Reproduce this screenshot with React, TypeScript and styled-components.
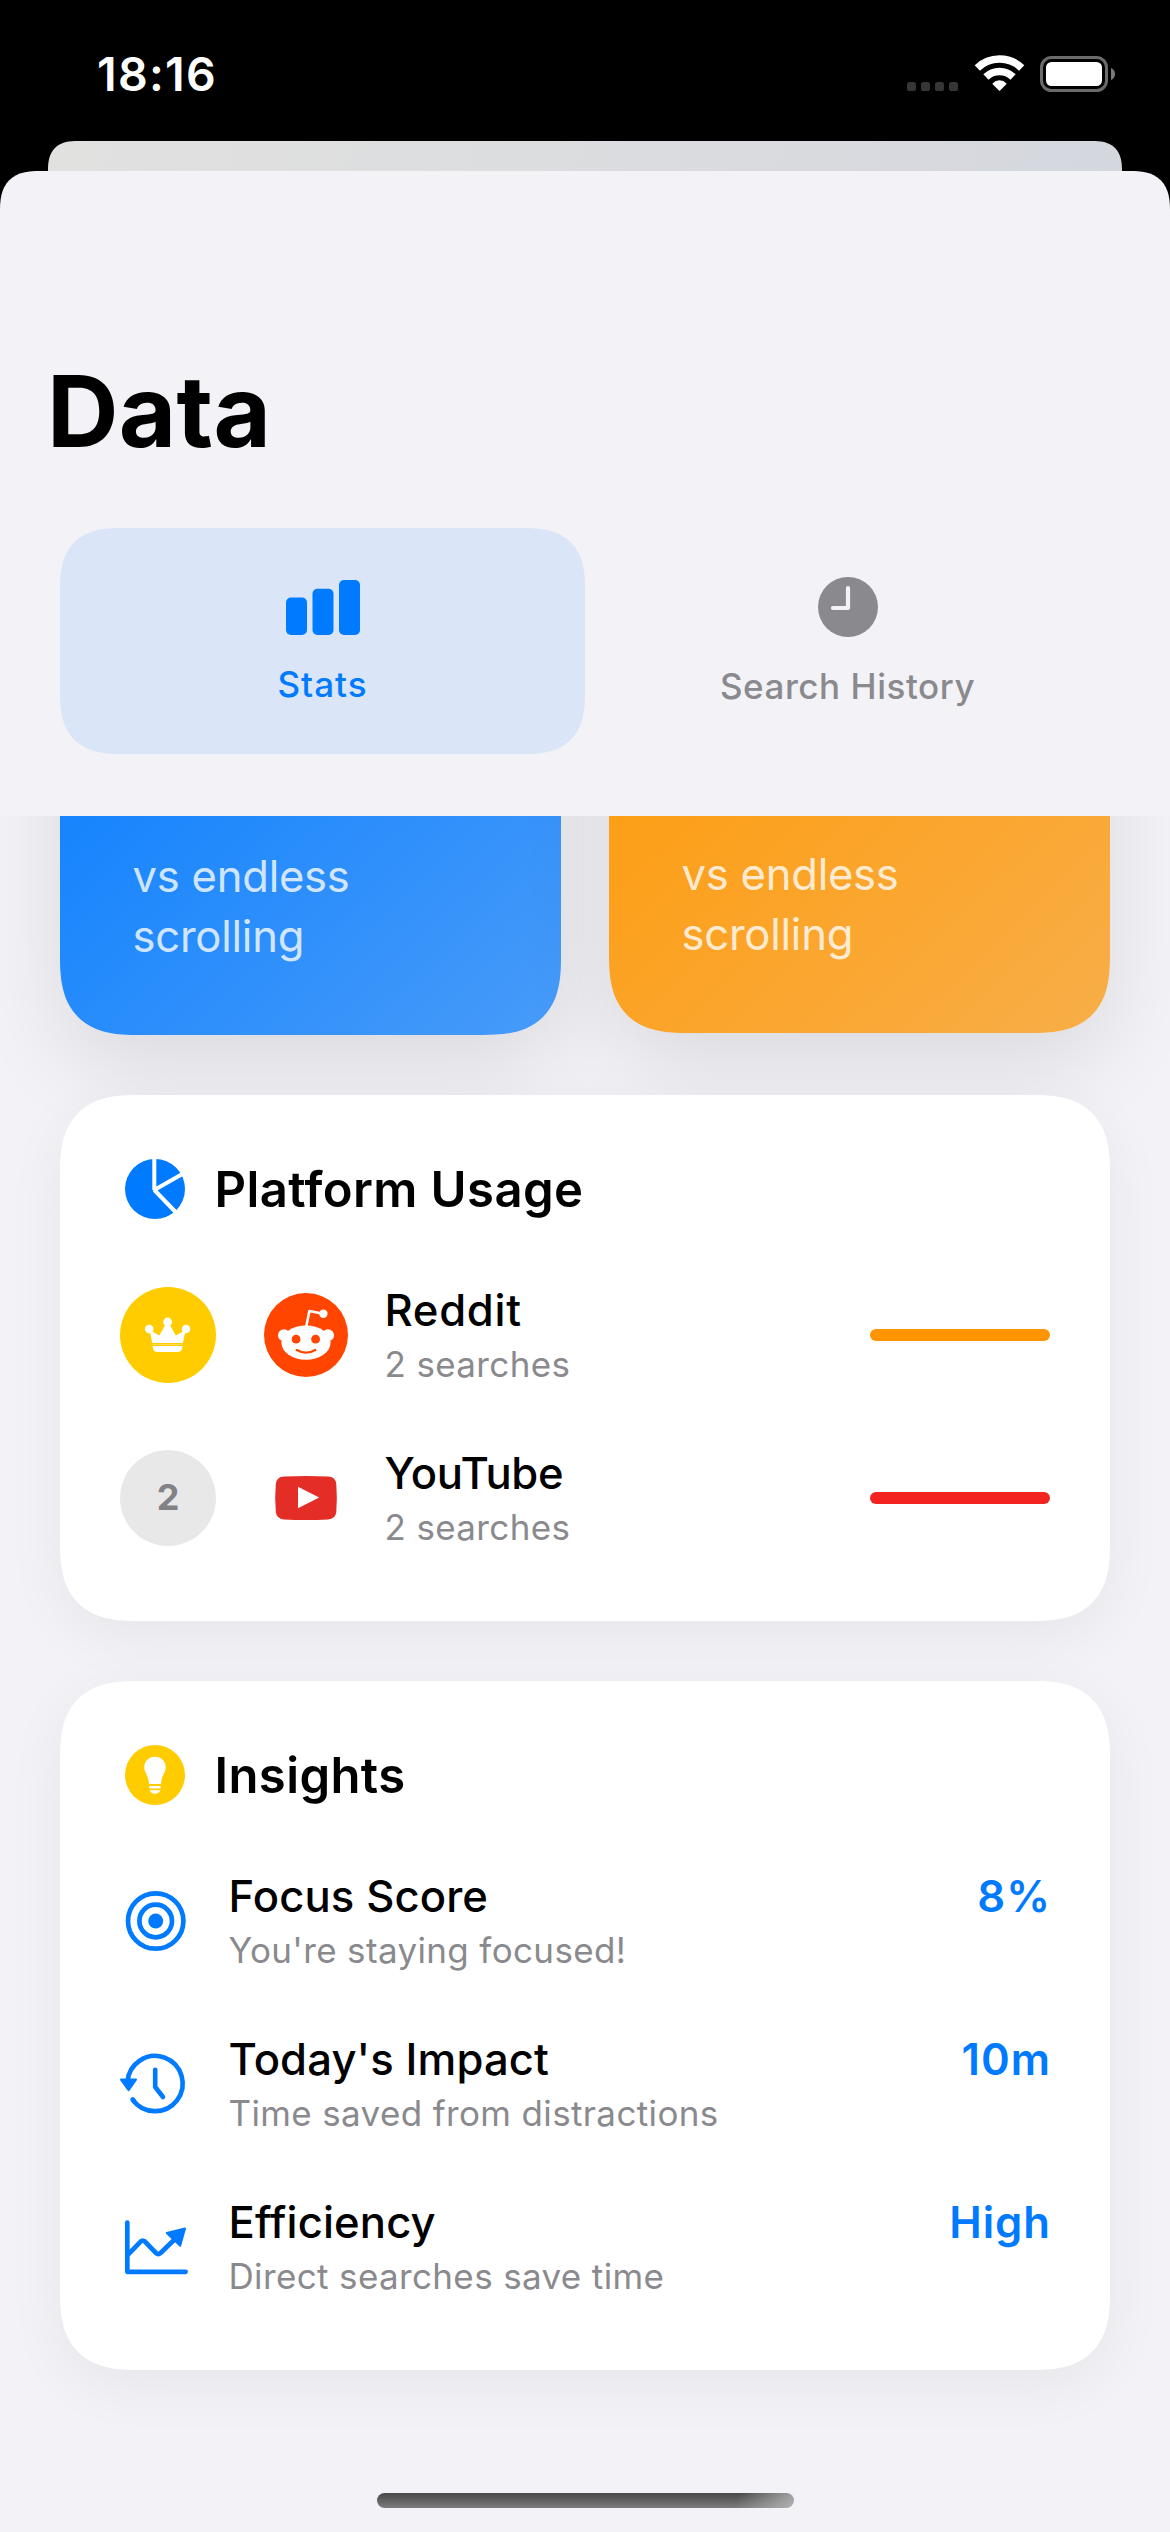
import React from "react";
import styled, { createGlobalStyle } from "styled-components";

const color = {
  background: "#f2f2f7",
  blue: "#007aff",
  gray: "#8a8a8e",
  yellow: "#ffcc00",
  orange: "#ff9500",
  red: "#f22321",
};

const GlobalStyle = createGlobalStyle`
  html, body { margin: 0; padding: 0; background: #000; }
  *, *::before, *::after { box-sizing: border-box; }
  svg { display: block; flex: none; overflow: visible; }
  h1, h2, p { margin: 0; }
`;

const Screen = styled.div`
  position: relative;
  width: 1170px;
  height: 2532px;
  overflow: hidden;
  display: flex;
  flex-direction: column;
  background: #000;
  color: #000;
  font-family: Inter, "Liberation Sans", sans-serif;
`;

const StatusBar = styled.header`
  flex: none;
  height: 141px;
  padding: 0 55px 49px 97px;
  display: flex;
  align-items: flex-end;
  justify-content: space-between;
`;

const Clock = styled.span`
  margin-bottom: -10px;
  color: #fff;
  font-size: 46.5px;
  font-weight: 600;
  line-height: 56px;
  letter-spacing: 1.25px;
`;

const StatusIcons = styled.div`
  display: flex;
  align-items: flex-end;
  gap: 16.5px;
`;

const BackSheet = styled.div`
  flex: none;
  height: 30px;
  margin: 0 48px;
  border-radius: 40px 40px 0 0;
  corner-shape: superellipse(1.4);
  background: linear-gradient(100deg, #e1e1e0, #dcdddf 45%, #d4d7de);
`;

const Sheet = styled.main`
  flex: 1;
  min-height: 0;
  overflow: hidden;
  display: flex;
  flex-direction: column;
  border-radius: 40px 40px 0 0;
  corner-shape: superellipse(1.4);
  background: ${color.background};
`;

const SheetHeader = styled.div`
  flex: none;
  height: 645px;
  padding: 180px 60px 0;
`;

const Title = styled.h1`
  margin: 0 0 57px -13px;
  font-size: 99px;
  font-weight: 700;
  line-height: 120px;
  letter-spacing: 0.3px;
`;

const Tabs = styled.nav`
  display: grid;
  grid-template-columns: 1fr 1fr;
  height: 226px;
`;

const Tab = styled.div<{ $active?: boolean }>`
  display: flex;
  flex-direction: column;
  align-items: center;
  justify-content: center;
  gap: 28px;
  padding-top: ${(p) => (p.$active ? 3 : 1)}px;
  border-radius: 62px;
  corner-shape: superellipse(1.4);
  background: ${(p) => (p.$active ? "#dae5f7" : "transparent")};
  color: ${(p) => (p.$active ? color.blue : color.gray)};
  font-size: 35px;
  font-weight: 500;
  line-height: 42px;
  letter-spacing: ${(p) => (p.$active ? 1 : 0.55)}px;
`;

const Scroll = styled.div`
  flex: 1;
  min-height: 0;
  overflow: hidden;
  padding: 0 60px;
  display: flex;
  flex-direction: column;
  gap: 60px;
`;

const StatCards = styled.section`
  flex: none;
  display: grid;
  grid-template-columns: 1fr 1fr;
  align-items: start;
  gap: 48px;
  margin-top: -311px;
`;

const StatCard = styled.div<{ $from: string; $to: string; $height: number }>`
  height: ${(p) => p.$height}px;
  padding: 0 72px 68px 72.5px;
  display: flex;
  align-items: flex-end;
  border-radius: 78px;
  corner-shape: superellipse(1.4);
  background: linear-gradient(136.6deg, ${(p) => p.$from}, ${(p) => p.$to});
  box-shadow: 0 30px 90px rgba(0, 0, 0, 0.1);
`;

const StatCaption = styled.p`
  color: rgba(255, 255, 255, 0.8);
  font-size: 43.6px;
  line-height: 60px;
  letter-spacing: -0.25px;
`;

const Card = styled.section`
  flex: none;
  padding: 64px 60px 75px;
  display: flex;
  flex-direction: column;
  border-radius: 78px;
  corner-shape: superellipse(1.4);
  background: #fff;
  box-shadow: 0 15px 60px rgba(0, 0, 0, 0.055);
`;

const CardHeader = styled.div`
  height: 60px;
  margin-bottom: 68px;
  padding-left: 5px;
  display: flex;
  align-items: center;
  gap: 29.5px;
`;

const CardTitle = styled.h2`
  padding-top: 2px;
  font-size: 49px;
  font-weight: 600;
  line-height: 60px;
  letter-spacing: 0.4px;
`;

const Rows = styled.div`
  display: flex;
  flex-direction: column;
  gap: 67px;
`;

const Row = styled.div`
  height: 96px;
  display: flex;
  align-items: center;
`;

const Rank = styled.div<{ $first?: boolean }>`
  flex: none;
  width: 96px;
  height: 96px;
  margin-right: 48px;
  display: flex;
  align-items: center;
  justify-content: center;
  padding-bottom: ${(p) => (p.$first ? 0 : 2)}px;
  border-radius: 50%;
  background: ${(p) => (p.$first ? color.yellow : "#e8e8e8")};
  color: #828286;
  font-size: 36px;
  font-weight: 700;
`;

const RowText = styled.div`
  flex: 1;
  padding: 0 0 1px 36.5px;
  display: flex;
  flex-direction: column;
  gap: 5px;
`;

const Name = styled.p<{ $tracking?: number }>`
  font-size: 43.6px;
  font-weight: 500;
  line-height: 54px;
  letter-spacing: ${(p) => p.$tracking ?? 0.12}px;
`;

const Detail = styled.p`
  color: ${color.gray};
  font-size: 35px;
  line-height: 42px;
  letter-spacing: 0.36px;
`;

const UsageBar = styled.div<{ $color: string }>`
  flex: none;
  width: 180px;
  height: 12px;
  border-radius: 6px;
  background: ${(p) => p.$color};
`;

const Value = styled.p`
  align-self: flex-start;
  margin: -3px -1px 0 0;
  color: ${color.blue};
  font-size: 43.6px;
  font-weight: 600;
  line-height: 54px;
  letter-spacing: 1px;
`;

const HomeIndicator = styled.div`
  position: absolute;
  left: 377px;
  bottom: 24px;
  width: 417px;
  height: 15px;
  border-radius: 8px;
  background:
    linear-gradient(105deg, transparent 86%, rgba(190, 190, 190, 0.8) 100%),
    linear-gradient(#484848, #7c7c7c);
`;

const CellularDots = () => (
  <svg width="51" height="10" viewBox="0 0 51 10" fill="#363636">
    {[0, 14, 28, 42].map((x) => (
      <rect key={x} x={x} y="0" width="9" height="9" rx="2.6" />
    ))}
  </svg>
);

const WifiIcon = () => (
  <svg width="49" height="37" viewBox="0 0 48.6 37" fill="none" stroke="#fff" strokeWidth="7.6">
    <path d="M2.1 13A32 32 0 0 1 46.5 13" />
    <path d="M10.75 22A19.5 19.5 0 0 1 37.85 22" />
    <path
      d="M24.3 35L18.1 28.7A8.8 8.8 0 0 1 30.5 28.7Z"
      fill="#fff"
      strokeWidth="1.6"
      strokeLinejoin="round"
    />
  </svg>
);

const BatteryIcon = () => (
  <svg width="75" height="36" viewBox="0 0 75 36">
    <rect x="1.5" y="1.5" width="65" height="33" rx="10" fill="none" stroke="#6b6b6b" strokeWidth="3" />
    <rect x="6" y="6" width="56" height="24" rx="5.5" fill="#fff" />
    <path d="M71 12C73.5 13 75 15 75 18S73.5 23 71 24Z" fill="#7a7a7a" />
  </svg>
);

const BarsIcon = () => (
  <svg width="74" height="55" viewBox="0 0 74 55" fill="currentColor">
    <rect x="0" y="17.5" width="21" height="37.5" rx="5" />
    <rect x="26.5" y="8.7" width="21" height="46.3" rx="5" />
    <rect x="53" y="0" width="21" height="55" rx="5" />
  </svg>
);

const ClockFillIcon = () => (
  <svg width="60" height="60" viewBox="0 0 60 60">
    <circle cx="30" cy="30" r="30" fill="currentColor" />
    <path
      d="M30 11V31H15"
      fill="none"
      stroke={color.background}
      strokeWidth="4.2"
      strokeLinecap="round"
      strokeLinejoin="round"
    />
  </svg>
);

const PieIcon = () => (
  <svg width="60" height="60" viewBox="0 0 60 60">
    <circle cx="30" cy="30" r="30" fill={color.blue} />
    <path
      d="M29.3 -1V31L60 13.4M29.3 31L52.5 55"
      fill="none"
      stroke="#fff"
      strokeWidth="4"
      strokeLinejoin="bevel"
    />
  </svg>
);

const CrownIcon = () => (
  <svg width="96" height="96" viewBox="0 0 96 96" fill="#fff">
    <circle cx="29.2" cy="42" r="4.3" />
    <circle cx="47.6" cy="35" r="4.4" />
    <circle cx="66" cy="42" r="4.3" />
    <path d="M29.5 43L39.3 48.5L45.5 37.5H49.7L55.8 48.5L65.7 43L62.9 56H32.3Z" />
    <path d="M32.4 57.2H62.8V58H32.4Z" fillOpacity="0.4" />
    <path d="M32.6 59H62.6L61.8 62.4Q61 65 58 65H37.2Q34.2 65 33.4 62.4Z" />
  </svg>
);

const RedditIcon = () => (
  <svg width="84" height="84" viewBox="0 0 84 84" fill="#fff">
    <circle cx="42" cy="42" r="42" fill="#ff4500" />
    <path
      d="M42.3 33.5L45.4 18L59 20.8"
      fill="none"
      stroke="#fff"
      strokeWidth="2.6"
      strokeLinejoin="round"
    />
    <circle cx="59.4" cy="20.8" r="4.2" />
    <circle cx="20" cy="42.2" r="6" />
    <circle cx="64" cy="42.2" r="6" />
    <ellipse cx="42" cy="49.6" rx="24.6" ry="17.1" />
    <circle cx="32.1" cy="46.2" r="4.4" fill="#ff4500" />
    <circle cx="51.6" cy="46.2" r="4.4" fill="#ff4500" />
    <path
      d="M32.8 57Q42 62.4 51.2 57"
      fill="none"
      stroke="#ff4500"
      strokeWidth="2.3"
      strokeLinecap="round"
    />
  </svg>
);

const YouTubeIcon = () => (
  <svg width="84" height="84" viewBox="0 0 84 84">
    <path
      d="M20 20.6Q42 19.4 64 20.6Q71.6 21 72.3 28Q73.4 42 72.3 56Q71.6 63 64 63.4Q42 64.6 20 63.4Q12.6 63 11.8 56Q10.6 42 11.8 28Q12.6 21 20 20.6Z"
      fill="#e52d27"
    />
    <path d="M34 30.8L55.2 41.4L34 52.2Z" fill="#fff" />
  </svg>
);

const BulbIcon = () => (
  <svg width="60" height="60" viewBox="0 0 60 60">
    <circle cx="30" cy="30" r="30" fill={color.yellow} />
    <g fill="#fff">
      <path d="M30 11.7C36.2 11.7 40.7 16.2 40.7 22C40.7 28 36.8 29 36 39H24C23.2 29 19.3 28 19.3 22C19.3 16.2 23.8 11.7 30 11.7Z" />
      <rect x="24.2" y="41" width="11.6" height="2.6" rx="0.8" />
      <path d="M24.6 45.3H35.4C34.6 47.6 32.6 48.8 30 48.8S25.4 47.6 24.6 45.3Z" />
    </g>
  </svg>
);

const TargetIcon = () => (
  <svg width="72" height="96" viewBox="120 -48 72 96" fill="none" stroke={color.blue} strokeWidth="4.7">
    <circle cx="155.7" cy="0" r="27.7" />
    <circle cx="155.7" cy="0" r="16.3" />
    <circle cx="155.7" cy="0" r="7.5" fill={color.blue} stroke="none" />
  </svg>
);

const HistoryIcon = () => (
  <svg
    width="72"
    height="96"
    viewBox="120 -48 72 96"
    fill="none"
    stroke={color.blue}
    strokeWidth="4.6"
    strokeLinecap="round"
    strokeLinejoin="round"
  >
    <path d="M127.5 -2A27.6 27.6 0 1 1 132.6 15.6" strokeLinecap="butt" />
    <path d="M132.6 15.4A27.6 27.6 0 0 0 134 17.3" />
    <path d="M155.2 -14.3V3L163 13" />
    <path d="M121 -4.4H136L128.6 6.2Z" fill={color.blue} strokeWidth="2" />
  </svg>
);

const TrendIcon = () => (
  <svg
    width="72"
    height="96"
    viewBox="120 -48 72 96"
    fill="none"
    stroke={color.blue}
    strokeWidth="4.7"
    strokeLinecap="round"
    strokeLinejoin="round"
  >
    <path d="M127.3 -24.3V24.8H185.6" />
    <path d="M128.5 7.2L140.6 -5.4Q142.8 -7.4 145 -5.4L156 6Q158.3 8 160.6 6L175 -8" />
    <path d="M185 -18.6L166.8 -14L180.2 -1.2Z" fill={color.blue} strokeWidth="2" />
  </svg>
);

const insights = [
  { icon: <TargetIcon />, name: "Focus Score", detail: "You're staying focused!", value: "8%" },
  { icon: <HistoryIcon />, name: "Today's Impact", detail: "Time saved from distractions", value: "10m" },
  { icon: <TrendIcon />, name: "Efficiency", detail: "Direct searches save time", value: "High" },
];

export default function App() {
  return (
    <>
      <GlobalStyle />
      <Screen>
        <StatusBar>
          <Clock>18:16</Clock>
          <StatusIcons>
            <CellularDots />
            <WifiIcon />
            <BatteryIcon />
          </StatusIcons>
        </StatusBar>
        <BackSheet />
        <Sheet>
          <SheetHeader>
            <Title>Data</Title>
            <Tabs>
              <Tab $active>
                <BarsIcon />
                <span>Stats</span>
              </Tab>
              <Tab>
                <ClockFillIcon />
                <span>Search History</span>
              </Tab>
            </Tabs>
          </SheetHeader>
          <Scroll>
            <StatCards>
              <StatCard $from="#007aff" $to="#489bf9" $height={530}>
                <StatCaption>vs endless scrolling</StatCaption>
              </StatCard>
              <StatCard $from="#ff9700" $to="#f8ae48" $height={528}>
                <StatCaption>vs endless scrolling</StatCaption>
              </StatCard>
            </StatCards>
            <Card>
              <CardHeader>
                <PieIcon />
                <CardTitle>Platform Usage</CardTitle>
              </CardHeader>
              <Rows>
                <Row>
                  <Rank $first>
                    <CrownIcon />
                  </Rank>
                  <RedditIcon />
                  <RowText>
                    <Name $tracking={0.7}>Reddit</Name>
                    <Detail>2 searches</Detail>
                  </RowText>
                  <UsageBar $color={color.orange} />
                </Row>
                <Row>
                  <Rank>2</Rank>
                  <YouTubeIcon />
                  <RowText>
                    <Name $tracking={-0.3}>YouTube</Name>
                    <Detail>2 searches</Detail>
                  </RowText>
                  <UsageBar $color={color.red} />
                </Row>
              </Rows>
            </Card>
            <Card>
              <CardHeader>
                <BulbIcon />
                <CardTitle>Insights</CardTitle>
              </CardHeader>
              <Rows>
                {insights.map((item) => (
                  <Row key={item.name}>
                    {item.icon}
                    <RowText>
                      <Name>{item.name}</Name>
                      <Detail>{item.detail}</Detail>
                    </RowText>
                    <Value>{item.value}</Value>
                  </Row>
                ))}
              </Rows>
            </Card>
          </Scroll>
        </Sheet>
        <HomeIndicator />
      </Screen>
    </>
  );
}
